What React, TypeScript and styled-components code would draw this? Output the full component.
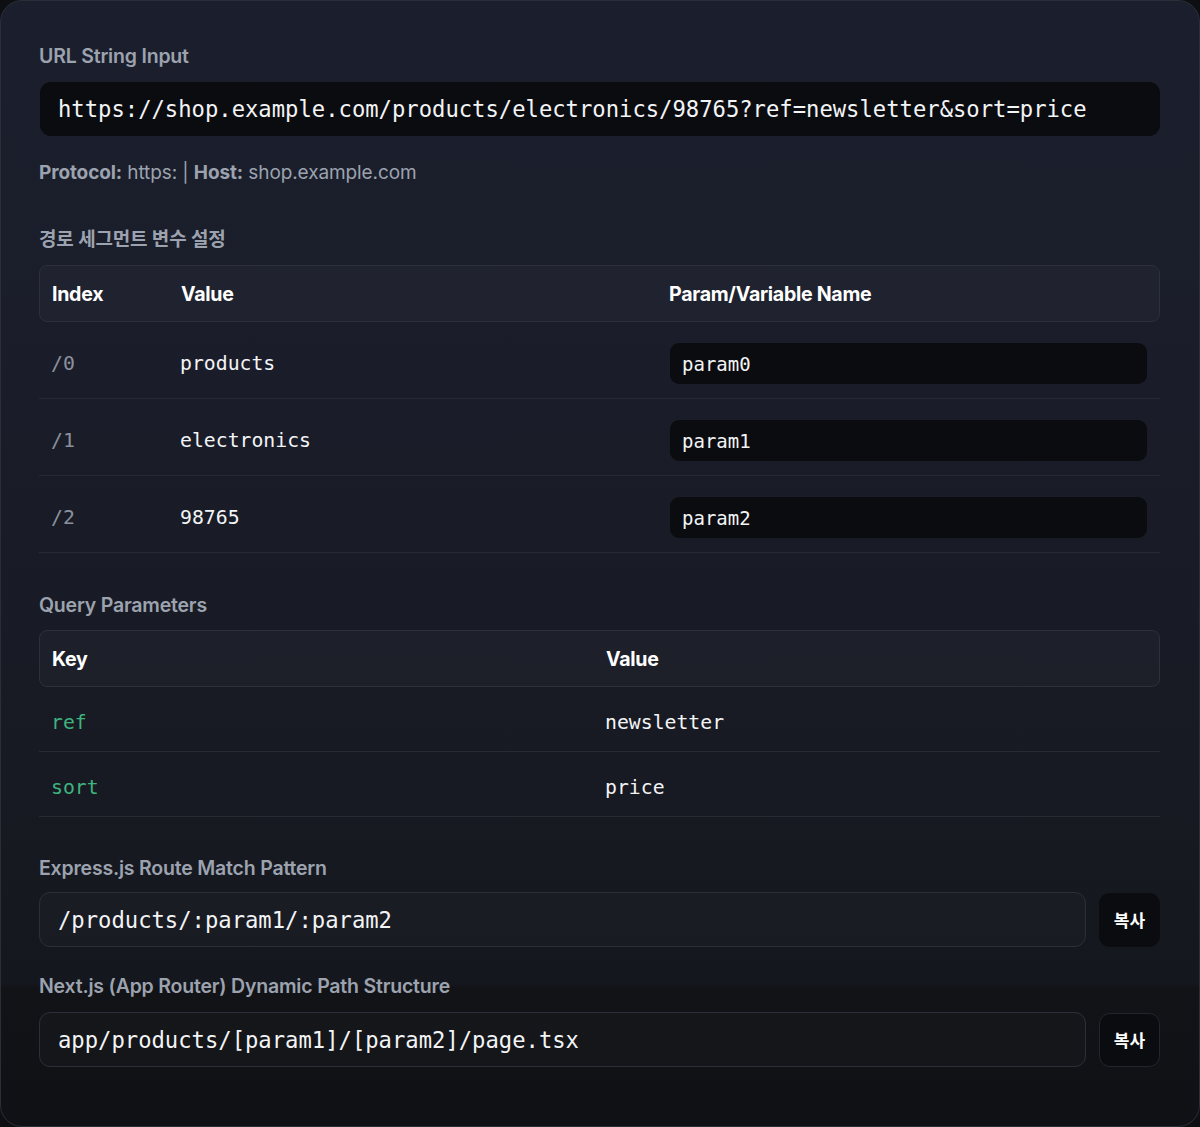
import styled, { createGlobalStyle } from "styled-components";

const GlobalStyle = createGlobalStyle`
  html, body {
    margin: 0;
    padding: 0;
    background: #0d0f13;
  }
  * { box-sizing: border-box; }
`;

const MONO = `"DejaVu Sans Mono", "Liberation Mono", monospace`;
const SANS = `Inter, "Noto Sans CJK KR", "Noto Sans", sans-serif`;

const segments = [
  { index: "/0", value: "products", name: "param0" },
  { index: "/1", value: "electronics", name: "param1" },
  { index: "/2", value: "98765", name: "param2" },
];

const queries = [
  { key: "ref", value: "newsletter" },
  { key: "sort", value: "price" },
];

export default function App() {
  return (
    <>
      <GlobalStyle />
      <Card>
        <Section>
          <Label>URL String Input</Label>
          <UrlBox>https://shop.example.com/products/electronics/98765?ref=newsletter&amp;sort=price</UrlBox>
        </Section>

        <Meta>
          <b>Protocol:</b> https: | <b>Host:</b> shop.example.com
        </Meta>

        <Section $gap={12}>
          <Label $size={19}>경로 세그먼트 변수 설정</Label>
          <div>
            <HeadRow $cols="129px 1fr 502px">
              <HeadCell>Index</HeadCell>
              <HeadCell>Value</HeadCell>
              <HeadCell>Param/Variable Name</HeadCell>
            </HeadRow>
            {segments.map((s) => (
              <Row key={s.index} $cols="129px 1fr 502px" $height={77}>
                <Cell $muted>{s.index}</Cell>
                <Cell>{s.value}</Cell>
                <Cell>
                  <NameInput defaultValue={s.name} />
                </Cell>
              </Row>
            ))}
          </div>
        </Section>

        <Section $gap={12} $top={39}>
          <Label>Query Parameters</Label>
          <div>
            <HeadRow $cols="554px 1fr">
              <HeadCell>Key</HeadCell>
              <HeadCell>Value</HeadCell>
            </HeadRow>
            {queries.map((q) => (
              <Row key={q.key} $cols="554px 1fr" $height={65}>
                <Cell $green>{q.key}</Cell>
                <Cell>{q.value}</Cell>
              </Row>
            ))}
          </div>
        </Section>

        <Section $top={38} $gap={11}>
          <Label>Express.js Route Match Pattern</Label>
          <OutputRow>
            <OutputBox>/products/:param1/:param2</OutputBox>
            <CopyButton>복사</CopyButton>
          </OutputRow>
        </Section>

        <Section $top={26} $gap={13}>
          <Label>Next.js (App Router) Dynamic Path Structure</Label>
          <OutputRow>
            <OutputBox>app/products/[param1]/[param2]/page.tsx</OutputBox>
            <CopyButton $bordered>복사</CopyButton>
          </OutputRow>
        </Section>
      </Card>
    </>
  );
}

const Card = styled.div`
  width: 1200px;
  height: 1127px;
  padding: 42px 39px 0 38px;
  border: 1px solid #2a2e39;
  border-radius: 22px;
  background: linear-gradient(
    180deg,
    #1b1f2d 0%,
    #1a1d29 35%,
    #171a22 70%,
    #15171e 87.4%,
    #111317 87.7%,
    #0f1114 100%
  );
  font-family: ${SANS};
  display: flex;
  flex-direction: column;
`;

const Section = styled.div<{ $gap?: number; $top?: number }>`
  display: flex;
  flex-direction: column;
  gap: ${(p) => p.$gap ?? 13}px;
  margin-top: ${(p) => p.$top ?? 0}px;
`;

const Label = styled.div<{ $size?: number }>`
  font-size: ${(p) => p.$size ?? 19.5}px;
  line-height: 26px;
  font-weight: 600;
  color: #9ca3af;
  letter-spacing: -0.2px;
`;

const UrlBox = styled.div`
  height: 54px;
  margin-left: 1px;
  width: 1120px;
  border-radius: 11px;
  background: #0b0c10;
  color: #f3f4f6;
  font-family: ${MONO};
  font-size: 22.2px;
  display: flex;
  align-items: center;
  padding-left: 18px;
  white-space: nowrap;
`;

const Meta = styled.div`
  margin-top: 24px;
  margin-bottom: 41px;
  font-size: 19px;
  line-height: 26px;
  color: #9ca3af;
  letter-spacing: -0.1px;

  b {
    font-weight: 700;
  }
`;

const HeadRow = styled.div<{ $cols: string }>`
  display: grid;
  grid-template-columns: ${(p) => p.$cols};
  height: 57px;
  align-items: center;
  border: 1px solid #2b303b;
  border-radius: 8px;
  background: rgba(255, 255, 255, 0.025);
`;

const HeadCell = styled.div`
  padding-left: 12px;
  font-size: 19.6px;
  font-weight: 700;
  color: #ffffff;
  letter-spacing: -0.3px;
`;

const Row = styled.div<{ $cols: string; $height: number }>`
  display: grid;
  grid-template-columns: ${(p) => p.$cols};
  height: ${(p) => p.$height}px;
  padding-top: 7px;
  align-items: center;
  border-bottom: 1px solid #262a33;
`;

const Cell = styled.div<{ $muted?: boolean; $green?: boolean }>`
  padding-left: 12px;
  padding-right: 12px;
  font-family: ${MONO};
  font-size: 19.8px;
  color: ${(p) => (p.$muted ? "#8b919c" : p.$green ? "#3fb37f" : "#f3f4f6")};
`;

const NameInput = styled.input`
  width: 477px;
  height: 41px;
  border: none;
  outline: none;
  border-radius: 9px;
  background: #0b0c10;
  color: #f3f4f6;
  font-family: ${MONO};
  font-size: 19px;
  padding: 0 12px;
`;

const OutputRow = styled.div`
  display: flex;
  align-items: center;
  gap: 13px;
`;

const OutputBox = styled.div`
  flex: 1;
  height: 55px;
  border: 1px solid #2b2f39;
  border-radius: 11px;
  background: rgba(255, 255, 255, 0.02);
  color: #f3f4f6;
  font-family: ${MONO};
  font-size: 22.2px;
  display: flex;
  align-items: center;
  padding-left: 18px;
  white-space: nowrap;
`;

const CopyButton = styled.button<{ $bordered?: boolean }>`
  width: 61px;
  height: 54px;
  border-radius: 11px;
  border: 1px solid ${(p) => (p.$bordered ? "#22252d" : "transparent")};
  background: #0b0c10;
  color: #ffffff;
  font-family: ${SANS};
  font-size: 17px;
  font-weight: 700;
  padding: 0;
  cursor: pointer;
`;
